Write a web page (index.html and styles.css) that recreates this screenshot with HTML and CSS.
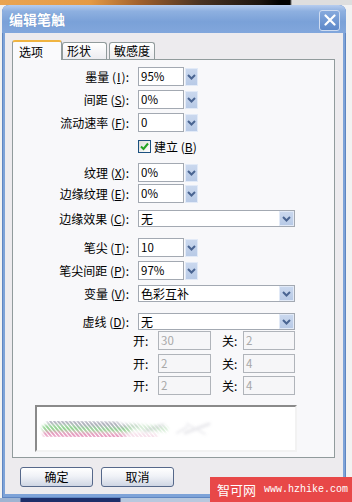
FILE: index.html
```html
<!DOCTYPE html>
<html lang="zh-CN">
<head>
    <meta charset="UTF-8">
    <meta name="viewport" content="width=device-width, initial-scale=1.0">
    <title>编辑笔触</title>
    <link rel="stylesheet" href="styles.css">
</head>
<body>
    <div class="desk-top"></div>
    <div class="window">
        <div class="titlebar">
            <span class="title">编辑笔触</span>
            <div class="close-btn">
                <svg width="12" height="12" viewBox="0 0 12 12"><path d="M1.5 1.5L10.5 10.5M10.5 1.5L1.5 10.5" stroke="#fff" stroke-width="2.2" stroke-linecap="round"/></svg>
            </div>
        </div>
        <div class="client">
            <div class="tabs">
                <div class="tab active">选项</div>
                <div class="tab">形状</div>
                <div class="tab">敏感度</div>
            </div>
            <div class="panel">
                <div class="row m7">
                    <span class="lbl">墨量 (<u class="narrow">I</u>):</span>
                    <div class="field small">95%</div>
                    <div class="drop"><svg width="9" height="6" viewBox="0 0 9 6"><path d="M1 1L4.5 4.5L8 1" stroke="#4a6592" stroke-width="2" fill="none"/></svg></div>
                </div>
                <div class="row m4">
                    <span class="lbl">间距 (<u>S</u>):</span>
                    <div class="field small">0%</div>
                    <div class="drop"><svg width="9" height="6" viewBox="0 0 9 6"><path d="M1 1L4.5 4.5L8 1" stroke="#4a6592" stroke-width="2" fill="none"/></svg></div>
                </div>
                <div class="row m4">
                    <span class="lbl">流动速率 (<u>F</u>):</span>
                    <div class="field small">0</div>
                    <div class="drop"><svg width="9" height="6" viewBox="0 0 9 6"><path d="M1 1L4.5 4.5L8 1" stroke="#4a6592" stroke-width="2" fill="none"/></svg></div>
                </div>
                <div class="check-row m7">
                    <div class="checkbox"><svg width="11" height="11" viewBox="0 0 11 11"><path d="M2 5.5L4.5 8L9 2.5" stroke="#22a322" stroke-width="2" fill="none"/></svg></div>
                    <span>建立 (<u>B</u>)</span>
                </div>
                <div class="row m10">
                    <span class="lbl">纹理 (<u>X</u>):</span>
                    <div class="field small">0%</div>
                    <div class="drop"><svg width="9" height="6" viewBox="0 0 9 6"><path d="M1 1L4.5 4.5L8 1" stroke="#4a6592" stroke-width="2" fill="none"/></svg></div>
                </div>
                <div class="row m2">
                    <span class="lbl">边缘纹理 (<u>E</u>):</span>
                    <div class="field small">0%</div>
                    <div class="drop"><svg width="9" height="6" viewBox="0 0 9 6"><path d="M1 1L4.5 4.5L8 1" stroke="#4a6592" stroke-width="2" fill="none"/></svg></div>
                </div>
                <div class="row wide-row m7">
                    <span class="lbl">边缘效果 (<u>C</u>):</span>
                    <div class="field wide">无
                        <div class="drop inside"><svg width="9" height="6" viewBox="0 0 9 6"><path d="M1 1L4.5 4.5L8 1" stroke="#4a6592" stroke-width="2" fill="none"/></svg></div>
                    </div>
                </div>
                <div class="row m11">
                    <span class="lbl">笔尖 (<u>T</u>):</span>
                    <div class="field small">10</div>
                    <div class="drop"><svg width="9" height="6" viewBox="0 0 9 6"><path d="M1 1L4.5 4.5L8 1" stroke="#4a6592" stroke-width="2" fill="none"/></svg></div>
                </div>
                <div class="row m4">
                    <span class="lbl">笔尖间距 (<u>P</u>):</span>
                    <div class="field small">97%</div>
                    <div class="drop"><svg width="9" height="6" viewBox="0 0 9 6"><path d="M1 1L4.5 4.5L8 1" stroke="#4a6592" stroke-width="2" fill="none"/></svg></div>
                </div>
                <div class="row wide-row m5">
                    <span class="lbl">变量 (<u>V</u>):</span>
                    <div class="field wide">色彩互补
                        <div class="drop inside"><svg width="9" height="6" viewBox="0 0 9 6"><path d="M1 1L4.5 4.5L8 1" stroke="#4a6592" stroke-width="2" fill="none"/></svg></div>
                    </div>
                </div>
                <div class="row wide-row m11">
                    <span class="lbl">虚线 (<u>D</u>):</span>
                    <div class="field wide">无
                        <div class="drop inside"><svg width="9" height="6" viewBox="0 0 9 6"><path d="M1 1L4.5 4.5L8 1" stroke="#4a6592" stroke-width="2" fill="none"/></svg></div>
                    </div>
                </div>
                <div class="dash-row m1">
                    <span class="dlbl">开:</span>
                    <div class="field off">30</div>
                    <span class="dlbl right">关:</span>
                    <div class="field off">2</div>
                </div>
                <div class="dash-row m4">
                    <span class="dlbl">开:</span>
                    <div class="field off">2</div>
                    <span class="dlbl right">关:</span>
                    <div class="field off">4</div>
                </div>
                <div class="dash-row m3">
                    <span class="dlbl">开:</span>
                    <div class="field off">2</div>
                    <span class="dlbl right">关:</span>
                    <div class="field off">4</div>
                </div>
                <div class="preview m10">
                    <svg width="258" height="43" viewBox="0 0 258 43">
                        <defs>
                            <filter id="soft" x="-10%" y="-50%" width="120%" height="200%"><feGaussianBlur stdDeviation="1.6"/></filter>
                            <pattern id="hairs" width="3" height="3" patternUnits="userSpaceOnUse" patternTransform="rotate(-40)">
                                <rect width="2" height="3" fill="#fff"/>
                            </pattern>
                            <mask id="bristle"><rect width="258" height="43" fill="url(#hairs)"/></mask>
                        </defs>
                        <g mask="url(#bristle)">
                            <g filter="url(#soft)" stroke-linecap="round" fill="none">
                                <path d="M12 15 L80 17" stroke="#a9a9b8" stroke-width="4"/>
                                <path d="M8 21 L92 22" stroke="#8fd38f" stroke-width="6"/>
                                <path d="M9 27 L86 29" stroke="#e79ac0" stroke-width="6"/>
                                <path d="M40 18 L100 19" stroke="#b4b4c2" stroke-width="4" opacity=".8"/>
                                <path d="M92 20 L128 22" stroke="#c6e6c6" stroke-width="6" opacity=".7"/>
                                <path d="M86 28 L118 29" stroke="#f0c8dc" stroke-width="5" opacity=".6"/>
                            </g>
                        </g>
                        <g filter="url(#soft)" opacity=".3" stroke-linecap="round" fill="none">
                            <path d="M108 24 L126 18" stroke="#b0b0bc" stroke-width="3"/>
                            <path d="M140 26 L150 20" stroke="#b8b8c4" stroke-width="2"/>
                            <path d="M148 26 L172 17" stroke="#b8b8c4" stroke-width="3"/>
                            <path d="M150 17 L168 27" stroke="#c0c0cc" stroke-width="2"/>
                        </g>
                    </svg>
                </div>
            </div>
            <div class="buttons">
                <div class="btn">确定</div>
                <div class="btn">取消</div>
            </div>
        </div>
    </div>
    <div class="desk-bottom"></div>
    <div class="watermark"><span class="wm-name">智可网</span><span class="wm-url">www.hzhike.com</span></div>
</body>
</html>
```

FILE: styles.css
```css
body {
    margin: 0;
    width: 352px;
    height: 502px;
    overflow: hidden;
    position: relative;
    background-color: #f2f2f2;
    font-family: "Noto Sans CJK SC", sans-serif;
    font-size: 12px;
    color: #000;
}
.desk-top {
    height: 5px;
    background: linear-gradient(90deg, #e9a452 0, #e49a45 90px, #a0602c 140px, #4a3322 200px, #1c1510 260px, #000 280px, #000 290px, #dedede 292px);
}
.window {
    margin-left: 2px;
    width: 344px;
    height: 493px;
    border-radius: 7px 7px 0 0;
    background-color: #7ea3d8;
    display: flex;
    flex-direction: column;
    box-shadow: inset 0 0 0 1px #5f86c2;
}
.titlebar {
    height: 28px;
    display: flex;
    align-items: center;
    justify-content: space-between;
    padding: 0 6px 0 7px;
    border-radius: 7px 7px 0 0;
    background: linear-gradient(180deg, #b6cdef 0, #8eb0e0 22%, #7aa1d8 60%, #82a7dc 100%);
}
.title {
    color: white;
    font-weight: bold;
    font-size: 14px;
    text-shadow: 0 0 1px #5c82bd;
}
.close-btn {
    width: 19px;
    height: 19px;
    margin-top: 2px;
    border: 1px solid #cfdcf1;
    border-radius: 3px;
    background: linear-gradient(180deg, #86a9dd, #5d88c9);
    display: flex;
    align-items: center;
    justify-content: center;
}
.client {
    flex: 1;
    margin: 0 3px 4px;
    padding: 7px 8px 0 7px;
    background-color: #edebee;
}
.tabs {
    display: flex;
    align-items: flex-end;
    height: 19px;
    position: relative;
    z-index: 1;
}
.tab {
    height: 17px;
    line-height: 16px;
    padding: 0 4px;
    box-sizing: border-box;
    border: 1px solid #919b9c;
    border-bottom: none;
    border-radius: 3px 3px 0 0;
    background: linear-gradient(180deg, #ffffff, #ececf0);
    min-width: 45px;
    white-space: nowrap;
    font-size: 12px;
}
.tab + .tab {
    margin-left: 2px;
}
.tab.active {
    width: 50px;
    height: 20px;
    margin-bottom: -1px;
    padding-left: 6px;
    line-height: 19px;
    background: #fafafc;
    border-top: 2px solid #f0b441;
}
.tab.active + .tab {
    margin-left: 0;
}
.panel {
    height: 399px;
    box-sizing: border-box;
    border: 1px solid #919b9c;
    background-color: #f8f8fa;
    display: flex;
    flex-direction: column;
}
.row {
    display: flex;
    align-items: center;
    height: 19px;
}
.wide-row {
    height: 17px;
}
.lbl {
    width: 116px;
    margin-right: 9px;
    text-align: right;
    white-space: nowrap;
    line-height: 14px;
}
u.narrow {
    padding: 0 1px;
}
.field {
    box-sizing: border-box;
    height: 19px;
    border: 1px solid #a3a9b2;
    background: white;
    padding-left: 2px;
    font-size: 11.5px;
    line-height: 17px;
    position: relative;
}
.field.small {
    width: 46px;
}
.field.wide {
    width: 157px;
    height: 17px;
    line-height: 15px;
    font-size: 12px;
}
.field.off {
    width: 53px;
    border-color: #b0b4ba;
    background: #f6f6f8;
    color: #a8a8a8;
}
.drop {
    width: 13px;
    height: 18px;
    margin-left: 1px;
    box-sizing: border-box;
    border: 1px solid #e2eaf7;
    background: linear-gradient(180deg, #cad8ee, #b8cae6);
    display: flex;
    align-items: center;
    justify-content: center;
}
.drop.inside {
    position: absolute;
    right: 0;
    top: 0;
    width: 15px;
    height: 15px;
}
.check-row {
    display: flex;
    align-items: center;
    height: 14px;
    padding-left: 125px;
}
.checkbox {
    width: 13px;
    height: 13px;
    box-sizing: border-box;
    border: 1px solid #1c5180;
    background: linear-gradient(135deg, #dcdcd7, #fff);
    margin-right: 3px;
    display: flex;
    align-items: center;
    justify-content: center;
}
.dash-row {
    display: flex;
    align-items: center;
    height: 19px;
    padding-left: 120px;
}
.dlbl {
    width: 25px;
    line-height: 14px;
}
.dlbl.right {
    width: 21px;
    margin-left: 11px;
}
.dash-row .field.off:last-child {
    width: 52px;
}
.preview {
    width: 262px;
    height: 47px;
    margin-left: 22px;
    box-sizing: border-box;
    border: 2px solid;
    border-color: #8a8a8a #f2f2f2 #f2f2f2 #8a8a8a;
    background: white;
}
.preview svg {
    display: block;
}
.m1 { margin-top: 1px; }
.m2 { margin-top: 2px; }
.m3 { margin-top: 3px; }
.m4 { margin-top: 4px; }
.m5 { margin-top: 5px; }
.m7 { margin-top: 7px; }
.m10 { margin-top: 10px; }
.m11 { margin-top: 11px; }
.buttons {
    display: flex;
    gap: 8px;
    margin-top: 9px;
    padding-left: 8px;
}
.btn {
    width: 73px;
    height: 20px;
    box-sizing: border-box;
    border: 1px solid #56688a;
    border-radius: 3px;
    background: linear-gradient(180deg, #ffffff 0, #f0f2f7 45%, #cfd6e4 100%);
    text-align: center;
    line-height: 18px;
}
.desk-bottom {
    height: 4px;
    background: linear-gradient(90deg, #9fb4d2 0, #9fb4d2 20px, #1d2f6a 21px, #1d2f6a 120px, #b8c8de 121px);
}
.watermark {
    position: absolute;
    left: 210px;
    top: 477px;
    width: 142px;
    height: 25px;
    background-color: #e84848;
    color: white;
    display: flex;
    align-items: center;
    padding-left: 7px;
    box-sizing: border-box;
}
.wm-name {
    font-size: 13px;
    margin-right: 8px;
}
.wm-url {
    font-family: "Liberation Mono", monospace;
    font-size: 10px;
}
```
